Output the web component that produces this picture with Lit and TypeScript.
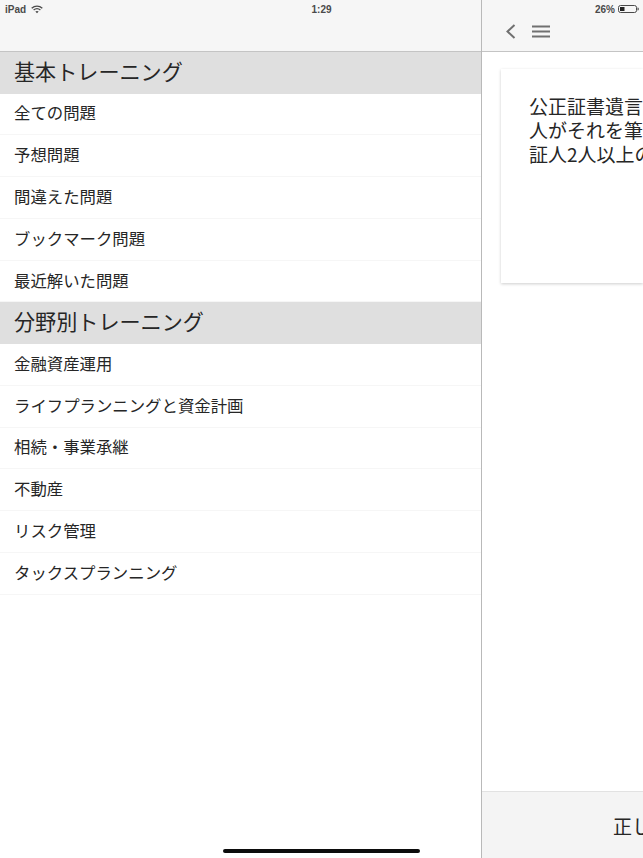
import { LitElement, html, css } from 'lit';
import { customElement } from 'lit/decorators.js';

const sections = [
	{ title: '基本トレーニング', items: ['全ての問題', '予想問題', '間違えた問題', 'ブックマーク問題', '最近解いた問題'] },
	{ title: '分野別トレーニング', items: ['金融資産運用', 'ライフプランニングと資金計画', '相続・事業承継', '不動産', 'リスク管理', 'タックスプランニング'] }
];

@customElement('app-root')
export class AppRoot extends LitElement {
	static styles = css`
		:host {
			display: block;
			position: relative;
			width: 643px;
			height: 858px;
			overflow: hidden;
			background: #fff;
			color: #262626;
			font-family: "Noto Sans CJK JP", "Liberation Sans", sans-serif;
		}
		.split {
			display: grid;
			grid-template-columns: 481px 1px 161px;
			height: 100%;
		}
		.divider { background: #b9b9b9; }
		.pane { display: flex; flex-direction: column; min-width: 0; overflow: hidden; }
		.nav {
			height: 51px;
			flex: none;
			background: #f6f6f6;
			border-bottom: 1px solid #c4c4c4;
		}
		.section {
			height: 41.5px;
			box-sizing: border-box;
			display: flex;
			align-items: center;
			padding: 0 0 4px 14px;
			background: #dfdfdf;
			font-size: 21.1px;
		}
		.row {
			height: 41.8px;
			box-sizing: border-box;
			display: flex;
			align-items: center;
			padding: 0 0 3px 14px;
			font-size: 16.4px;
			border-bottom: 1px solid #f6f6f6;
		}
		.tools {
			display: flex;
			align-items: center;
			gap: 16px;
			padding: 12px 0 0 23px;
			height: 39px;
		}
		.tools svg { display: block; }
		.body { flex: 1; padding: 17px 0 0 19px; }
		.card {
			height: 214px;
			box-sizing: border-box;
			padding: 25px 0 0 28px;
			background: #fff;
			box-shadow: 0 1px 3px rgba(0, 0, 0, 0.2);
			font-size: 19px;
			line-height: 24px;
			white-space: nowrap;
			overflow: hidden;
		}
		.answer {
			height: 66px;
			flex: none;
			background: #f4f4f4;
			border-top: 1px solid #e2e2e2;
			display: flex;
			align-items: center;
			padding-left: 131px;
			font-size: 19px;
			white-space: nowrap;
			overflow: hidden;
		}
		.status {
			position: absolute;
			top: 0;
			left: 0;
			right: 0;
			height: 18px;
			display: grid;
			grid-template-columns: 1fr auto 1fr;
			align-items: center;
			font-family: "Liberation Sans", sans-serif;
			font-size: 10px;
			font-weight: 700;
			color: #4a4a4a;
		}
		.status .left { display: flex; align-items: center; gap: 5px; padding-left: 5px; }
		.status .right { display: flex; align-items: center; justify-content: flex-end; gap: 3px; padding-right: 4px; }
		.home {
			position: absolute;
			left: 223px;
			top: 849px;
			width: 197px;
			height: 4px;
			border-radius: 2px;
			background: #0c0c0c;
		}
	`;

	render() {
		return html`
			<div class="split">
				<div class="pane">
					<div class="nav"></div>
					${sections.map(s => html`
						<div class="section">${s.title}</div>
						${s.items.map(i => html`<div class="row">${i}</div>`)}
					`)}
				</div>
				<div class="divider"></div>
				<div class="pane">
					<div class="nav tools">
						<svg width="11" height="15" viewBox="0 0 11 15" fill="none" stroke="#707070" stroke-width="2"><path d="M9.500 1 2.500 7.500 9.500 14"/></svg>
						<svg width="18" height="13" viewBox="0 0 18 13" fill="none" stroke="#707070" stroke-width="2"><path d="M0 1.500h18M0 6.500h18M0 11.500h18"/></svg>
					</div>
					<div class="body">
						<div class="card">
							<div>公正証書遺言</div>
							<div>人がそれを筆</div>
							<div>証人2人以上の</div>
						</div>
					</div>
					<div class="answer">正し</div>
				</div>
			</div>
			<div class="status">
				<div class="left">
					<span>iPad</span>
					<svg width="12" height="9" viewBox="0 0 12 9" fill="none" stroke="#4a4a4a" stroke-width="1.400"><path d="M.7 3.200C3.800.4 8.200.4 11.300 3.200M2.600 5C4.600 3.400 7.400 3.400 9.400 5"/><path d="M4.300 6.500C5.300 5.800 6.700 5.800 7.700 6.500L6 8.300z" fill="#4a4a4a" stroke="none"/></svg>
				</div>
				<div>1:29</div>
				<div class="right">
					<span>26%</span>
					<svg width="21" height="8" viewBox="0 0 21 8"><rect x=".5" y=".5" width="18" height="7" rx="2" fill="none" stroke="#4a4a4a"/><rect x="2" y="2" width="4.500" height="4" fill="#222"/><path d="M19.500 2.500v3c.9 0 1.300-.7 1.300-1.500s-.4-1.500-1.300-1.500z" fill="#4a4a4a"/></svg>
				</div>
			</div>
			<div class="home"></div>
		`;
	}
}
